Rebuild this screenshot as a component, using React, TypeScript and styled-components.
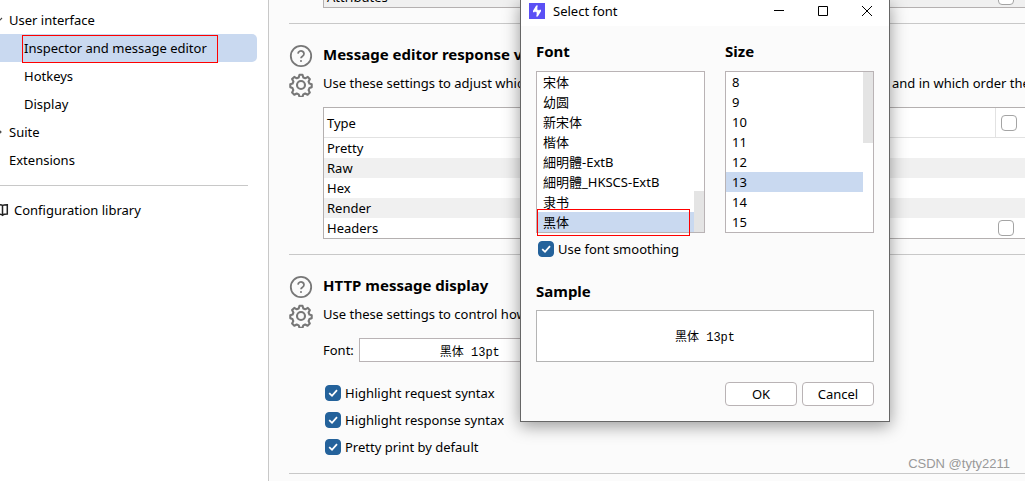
import React from "react";
import styled, { createGlobalStyle, css } from "styled-components";

const Global = createGlobalStyle`
  *, *::before, *::after { box-sizing: border-box; }
  body {
    margin: 0;
    background: #fbfbfb;
    color: #000;
    font-family: "Noto Sans", "Noto Sans CJK SC", sans-serif;
    font-size: 13px;
    line-height: 20px;
  }
  button, input { font: inherit; color: inherit; }
`;

const Page = styled.div`
  position: relative;
  display: grid;
  grid-template-columns: 269px minmax(0, 1fr);
  min-height: 100vh;
  overflow: hidden;
`;

const Sidebar = styled.nav`
  background: #fff;
  border-right: 1px solid #c8c8c8;
  padding: 6px 11px 0 0;
`;

const NavLink = styled.a<{ $level?: number; $active?: boolean }>`
  position: relative;
  display: flex;
  align-items: center;
  height: 28px;
  padding-left: ${(p) => (p.$level ? 24 : 9)}px;
  border-radius: 0 5px 5px 0;
  color: inherit;
  text-decoration: none;
  background: ${(p) => (p.$active ? "#c9d9f0" : "transparent")};
`;

const Chevron = styled.svg`
  position: absolute;
  left: -7px;
  top: 9px;
`;

const SideRule = styled.hr`
  margin: 11px 9px 10px 0;
  border: 0;
  border-top: 1px solid #c8c8c8;
`;

const LibraryLink = styled(NavLink)`
  padding-left: 14px;
`;

const BookIcon = styled.svg`
  position: absolute;
  left: -4px;
  top: 7px;
`;

const marked = css`
  content: "";
  position: absolute;
  border: 1px solid #f00;
  pointer-events: none;
`;

const MarkedLink = styled(NavLink)`
  &::after {
    ${marked}
    inset: 1px 39px -1px 22px;
  }
`;

const Main = styled.main`
  padding-left: 20px;
  overflow: hidden;
  white-space: nowrap;
`;

const Clip = styled.div`
  display: flex;
  align-items: flex-end;
  height: 8px;
  margin: 0 0 15px 34px;
  overflow: hidden;
`;

const Section = styled.section`
  display: grid;
  grid-template-columns: 24px minmax(0, 1fr);
  column-gap: 10px;
  padding: 20px 0 15px;
  border-top: 1px solid #c8c8c8;
`;

const EndRule = styled.hr`
  margin: 0;
  border: 0;
  border-top: 1px solid #c8c8c8;
`;

const Icons = styled.div`
  display: flex;
  flex-direction: column;
  gap: 5px;
`;

const IconButton = styled.button`
  display: block;
  width: 24px;
  height: 24px;
  padding: 0;
  border: 0;
  background: none;
  color: #777;
`;

const Title = styled.h2`
  margin: 0;
  font-size: 15px;
  line-height: 20px;
  font-weight: 700;
`;

const Intro = styled.p`
  display: flex;
  margin: 9px 0 14px;
`;

const IntroLead = styled.span`
  flex: none;
  width: 569px;
`;

const Table = styled.table<{ $shaded?: boolean }>`
  width: 100%;
  border: 1px solid #b4b0b0;
  border-right: 0;
  border-spacing: 0;
  background: ${(p) => (p.$shaded ? "#f0f0f0" : "#fff")};
  th, td {
    height: 20px;
    padding: 0 3px;
    text-align: left;
    font-weight: 400;
  }
  tbody tr:nth-child(even) { background: #f0f0f0; }
`;

const HeadCell = styled.th`
  && { height: 30px; }
  border-bottom: 1px solid #e2e2e2;
`;

const HeadCheckCell = styled(HeadCell)`
  width: 30px;
  border-left: 1px solid #e2e2e2;
  && { padding: 0 5px; }
`;

const CheckCell = styled.td`
  width: 30px;
`;

const Check = styled.input`
  appearance: none;
  display: block;
  flex: none;
  width: 16px;
  height: 16px;
  margin: 0;
  border: 1px solid #a4a4a4;
  border-radius: 4px;
  background: #fff;
  &:checked {
    border-color: #24629b;
    background: #24629b;
  }
`;

const CheckWrap = styled.span`
  position: relative;
  display: block;
`;

const Tick = styled.svg`
  position: absolute;
  inset: 0;
  pointer-events: none;
`;

const CheckLabel = styled.label`
  display: flex;
  align-items: center;
  gap: 4px;
  padding-left: 2px;
`;

const Options = styled.div`
  display: flex;
  flex-direction: column;
  gap: 7px;
  margin: 21px 0 1px;
`;

const FontRow = styled.div`
  display: flex;
  align-items: center;
  gap: 5px;
`;

const sampleFont = css`
  font-family: "Liberation Mono", "Noto Sans CJK SC", monospace;
  font-size: 12px;
`;

const FontButton = styled.button`
  && { ${sampleFont} }
  width: 222px;
  height: 24px;
  padding: 4px 0 0;
  border: 1px solid #b9b3b5;
  background: #fff;
`;

const Dialog = styled.div`
  position: absolute;
  top: 0;
  left: 520px;
  width: 370px;
  border: 1px solid #666;
  border-top: 0;
  background: #fbfbfb;
  box-shadow: 0 4px 16px rgba(0, 0, 0, 0.4);
`;

const TitleBar = styled.header`
  display: flex;
  align-items: center;
  height: 26px;
  padding: 0 0 4px 8px;
  background: #fff;
`;

const WindowTitle = styled.span`
  flex: 1;
  padding-left: 8px;
`;

const WindowButton = styled.button`
  display: grid;
  place-items: center;
  width: 44px;
  height: 22px;
  padding: 0;
  border: 0;
  background: none;
`;

const DialogBody = styled.div`
  padding: 15px;
`;

const Pickers = styled.div`
  display: grid;
  grid-template-columns: 169px 149px;
  gap: 20px;
`;

const ListFrame = styled.div`
  position: relative;
  margin-top: 10px;
  border: 1px solid #b9b3b5;
  background: #fff;
`;

const List = styled.ul`
  margin: 0;
  padding: 0 10px 0 0;
  list-style: none;
`;

const Option = styled.li`
  height: 20px;
  padding-left: 6px;
  &[aria-selected="true"] { background: #c9d9f0; }
`;

const Thumb = styled.span<{ $end?: boolean; $size: number }>`
  position: absolute;
  right: 0;
  ${(p) => (p.$end ? "bottom: 0;" : "top: 0;")}
  width: 10px;
  height: ${(p) => p.$size}px;
  background: #e4e4e4;
`;

const Mark = styled.span`
  &::after {
    ${marked}
    inset: 137px 14px -4px 0;
  }
`;

const Smoothing = styled.div`
  margin: 6px 0 22px;
`;

const Sample = styled.div`
  ${sampleFont}
  display: grid;
  place-items: center;
  height: 52px;
  margin: 9px 0 20px;
  padding-top: 4px;
  border: 1px solid #b4b4b4;
  background: #fff;
`;

const Actions = styled.div`
  display: flex;
  justify-content: flex-end;
  gap: 5px;
`;

const Action = styled.button`
  width: 72px;
  height: 24px;
  padding: 0;
  border: 1px solid #b9b3b5;
  border-radius: 4px;
  background: #fff;
`;

const Credit = styled.span`
  position: absolute;
  right: 15px;
  bottom: 7px;
  color: #999;
  font-family: "Liberation Sans", sans-serif;
  font-size: 13px;
`;

const HelpIcon = () => (
  <svg width="24" height="24" viewBox="0 0 24 24" fill="none" stroke="currentColor" strokeWidth="1.8">
    <circle cx="12" cy="12" r="10.2" />
    <path d="M9 9.6a3 2.800 0 1 1 4.500 2.600c-1 .6-1.500 1-1.500 2.100" />
    <circle cx="12" cy="17" r="0.6" fill="currentColor" strokeWidth="1" />
  </svg>
);

const GearIcon = () => (
  <svg width="24" height="24" viewBox="0 0 24 24" fill="none" stroke="currentColor" strokeWidth="2.1" strokeLinejoin="round">
    <circle cx="12" cy="12" r="4" />
    <path d="M10.500 1.800h3l.8 2.700 2 .8 2.500-1.400 2.100 2.200-1.300 2.500.8 2 2.300.7v3l-2.300.8-.8 2 1.200 2.400-2.200 2.200-2.400-1.200-1.900.9-.8 2.400h-3l-.8-2.400-2-.9-2.400 1.200L3.100 19.500l1.200-2.400-.8-2-2.200-.8v-3l2.300-.7.8-2L3.100 6.100l2.200-2.200 2.400 1.400 2-.8z" />
  </svg>
);

function CheckBox(props: { checked?: boolean; label?: string }) {
  return (
    <CheckWrap>
      <Check type="checkbox" defaultChecked={props.checked} aria-label={props.label} />
      {props.checked && (
        <Tick width="16" height="16" fill="none" stroke="#fff" strokeWidth="1.8">
          <path d="M4.2 8.2 7 10.8 12 5.2" />
        </Tick>
      )}
    </CheckWrap>
  );
}

function LabelledCheck({ text }: { text: string }) {
  return (
    <CheckLabel>
      <CheckBox checked label={text} />
      {text}
    </CheckLabel>
  );
}

function SectionIcons() {
  return (
    <Icons>
      <IconButton aria-label="Help"><HelpIcon /></IconButton>
      <IconButton aria-label="Section options"><GearIcon /></IconButton>
    </Icons>
  );
}

const views = ["Pretty", "Raw", "Hex", "Render", "Headers"];
const fonts = ["宋体", "幼圆", "新宋体", "楷体", "細明體-ExtB", "細明體_HKSCS-ExtB", "隶书", "黑体"];
const sizes = [8, 9, 10, 11, 12, 13, 14, 15];

export default function App() {
  return (
    <Page>
      <Global />
      <Sidebar>
        <NavLink href="#ui">
          <Chevron width="10" height="10" fill="none" stroke="#444" strokeWidth="1.2"><path d="M1 3l4 4 4-4" /></Chevron>
          User interface
        </NavLink>
        <MarkedLink href="#editor" $level={1} $active>Inspector and message editor</MarkedLink>
        <NavLink href="#hotkeys" $level={1}>Hotkeys</NavLink>
        <NavLink href="#display" $level={1}>Display</NavLink>
        <NavLink href="#suite">
          <Chevron width="10" height="10" fill="none" stroke="#444" strokeWidth="1.2"><path d="M4 1l4 4-4 4" /></Chevron>
          Suite
        </NavLink>
        <NavLink href="#extensions">Extensions</NavLink>
        <SideRule />
        <LibraryLink href="#library">
          <BookIcon width="14" height="14" fill="none" stroke="#222" strokeWidth="1.5">
            <path d="M6.500 2.500V12M6.500 2.500C5.500 1.700 4 1.700 1.500 1.700v9.300c2.200 0 4 0 5 1.200 1-1.200 2.800-1.200 4.800-1.200V1.700C9 1.700 7.500 1.700 6.500 2.500z" />
          </BookIcon>
          Configuration library
        </LibraryLink>
      </Sidebar>

      <Main>
        <Clip>
          <Table $shaded>
            <tbody>
              <tr>
                <td>Attributes</td>
                <CheckCell><CheckBox label="Attributes" /></CheckCell>
              </tr>
            </tbody>
          </Table>
        </Clip>

        <Section>
          <SectionIcons />
          <div>
            <Title>Message editor response views</Title>
            <Intro>
              <IntroLead>Use these settings to adjust which message editor views are displayed for responses,</IntroLead>
              <span>and in which order they are displayed.</span>
            </Intro>
            <Table>
              <thead>
                <tr>
                  <HeadCell>Type</HeadCell>
                  <HeadCheckCell><CheckBox label="All types" /></HeadCheckCell>
                </tr>
              </thead>
              <tbody>
                {views.map((view) => (
                  <tr key={view}>
                    <td>{view}</td>
                    <CheckCell>{view === "Headers" && <CheckBox label={view} />}</CheckCell>
                  </tr>
                ))}
              </tbody>
            </Table>
          </div>
        </Section>

        <Section>
          <SectionIcons />
          <div>
            <Title>HTTP message display</Title>
            <Intro>Use these settings to control how HTTP messages are displayed.</Intro>
            <FontRow>
              <label htmlFor="font">Font:</label>
              <FontButton id="font">黑体 13pt</FontButton>
            </FontRow>
            <Options>
              <LabelledCheck text="Highlight request syntax" />
              <LabelledCheck text="Highlight response syntax" />
              <LabelledCheck text="Pretty print by default" />
            </Options>
          </div>
        </Section>
        <EndRule />
      </Main>

      <Dialog role="dialog" aria-label="Select font">
        <TitleBar>
          <svg width="16" height="16">
            <path d="M0 0h16v16H0z" fill="#5b50f5" />
            <path d="M7.200 2.500h1.600v4.200h3.200v1.600L8.800 13.500H7.200V9.300H4V7.700z" fill="#fff" />
            <path d="M8.800 3.500v3.200h2M7.200 12.500V9.300h-2" fill="none" stroke="#5b50f5" strokeWidth=".8" />
          </svg>
          <WindowTitle>Select font</WindowTitle>
          <WindowButton aria-label="Minimize"><svg width="10" height="10" stroke="#000"><path d="M0 4.500h10" /></svg></WindowButton>
          <WindowButton aria-label="Maximize"><svg width="10" height="10" fill="none" stroke="#000"><path d="M.5.5h9v9h-9z" /></svg></WindowButton>
          <WindowButton aria-label="Close"><svg width="10" height="10" stroke="#000"><path d="M0 0l10 10M10 0L0 10" /></svg></WindowButton>
        </TitleBar>
        <DialogBody>
          <Pickers>
            <div>
              <Title>Font</Title>
              <ListFrame>
                <List role="listbox" aria-label="Font">
                  {fonts.map((f) => <Option key={f} role="option" aria-selected={f === "黑体"}>{f}</Option>)}
                </List>
                <Thumb $end $size={41} />
                <Mark />
              </ListFrame>
            </div>
            <div>
              <Title>Size</Title>
              <ListFrame>
                <List role="listbox" aria-label="Size">
                  {sizes.map((s) => <Option key={s} role="option" aria-selected={s === 13}>{s}</Option>)}
                </List>
                <Thumb $size={71} />
              </ListFrame>
            </div>
          </Pickers>
          <Smoothing><LabelledCheck text="Use font smoothing" /></Smoothing>
          <Title>Sample</Title>
          <Sample>黑体 13pt</Sample>
          <Actions>
            <Action>OK</Action>
            <Action>Cancel</Action>
          </Actions>
        </DialogBody>
      </Dialog>
      <Credit>CSDN @tyty2211</Credit>
    </Page>
  );
}
